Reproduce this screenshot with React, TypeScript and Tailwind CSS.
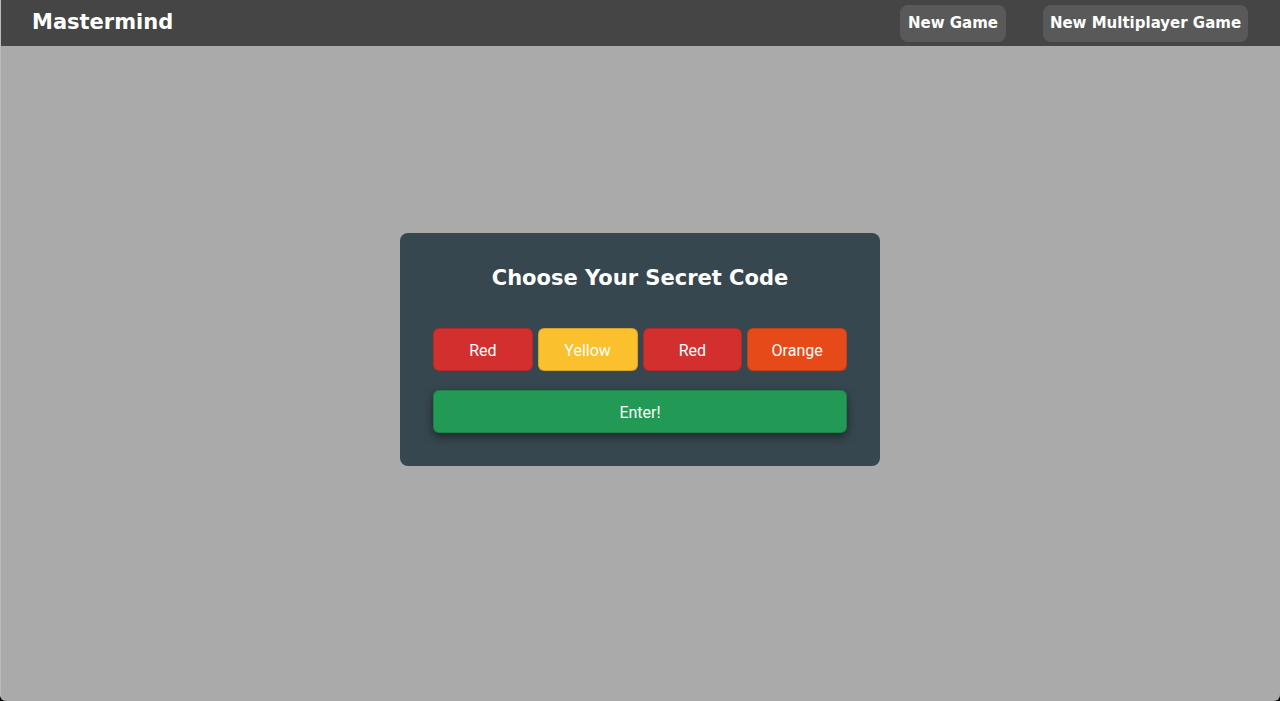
const codes = [
  { label: 'Red', bg: 'bg-[#d32f2f]' },
  { label: 'Yellow', bg: 'bg-[#fbc02d]' },
  { label: 'Red', bg: 'bg-[#d32f2f]' },
  { label: 'Orange', bg: 'bg-[#e64a19]' },
]

export default function App() {
  return (
    <div className="h-[701px] w-[1280px] bg-black">
      <div className="flex h-full flex-col overflow-hidden rounded-b-[6px] border-l border-[#bbbbbb] bg-[#aaaaaa]">
        <header className="flex h-[46px] shrink-0 items-center justify-between bg-[#454545] pl-[31px] pr-[32px]">
          <h1
            className="text-[21px] font-bold text-white"
            style={{ fontFamily: '"DejaVu Sans", sans-serif' }}
          >
            Mastermind
          </h1>
          <nav className="flex gap-[37px]" style={{ fontFamily: '"DejaVu Sans", sans-serif' }}>
            <button className="h-[37px] w-[106px] rounded-lg bg-[#595959] text-[15px] font-bold text-white">
              New Game
            </button>
            <button className="h-[37px] w-[205px] rounded-lg bg-[#595959] text-[15px] font-bold text-white">
              New Multiplayer Game
            </button>
          </nav>
        </header>
        <main className="flex flex-1 items-start justify-center pt-[187px] pr-px">
          <div className="flex w-[480px] flex-col rounded-lg bg-[#37474f] px-[33px] pt-[30px] pb-[33px]">
            <h2
              className="text-center text-[21px] font-bold text-white"
              style={{ fontFamily: '"DejaVu Sans", sans-serif' }}
            >
              Choose Your Secret Code
            </h2>
            <div
              className="mt-[33px] grid grid-cols-4 gap-[5px]"
              style={{ fontFamily: 'Roboto, sans-serif' }}
            >
              {codes.map((c, i) => (
                <button
                  key={i}
                  className={`h-[43px] rounded-md border border-black/15 pt-[3px] text-[16px] text-white ${c.bg}`}
                >
                  {c.label}
                </button>
              ))}
            </div>
            <button
              className="mt-[19px] h-[43px] rounded-md border border-black/15 bg-[#229955] pt-[3px] text-[16px] text-white shadow-[0_4px_10px_rgba(0,0,0,0.45)]"
              style={{ fontFamily: 'Roboto, sans-serif' }}
            >
              Enter!
            </button>
          </div>
        </main>
      </div>
    </div>
  )
}
